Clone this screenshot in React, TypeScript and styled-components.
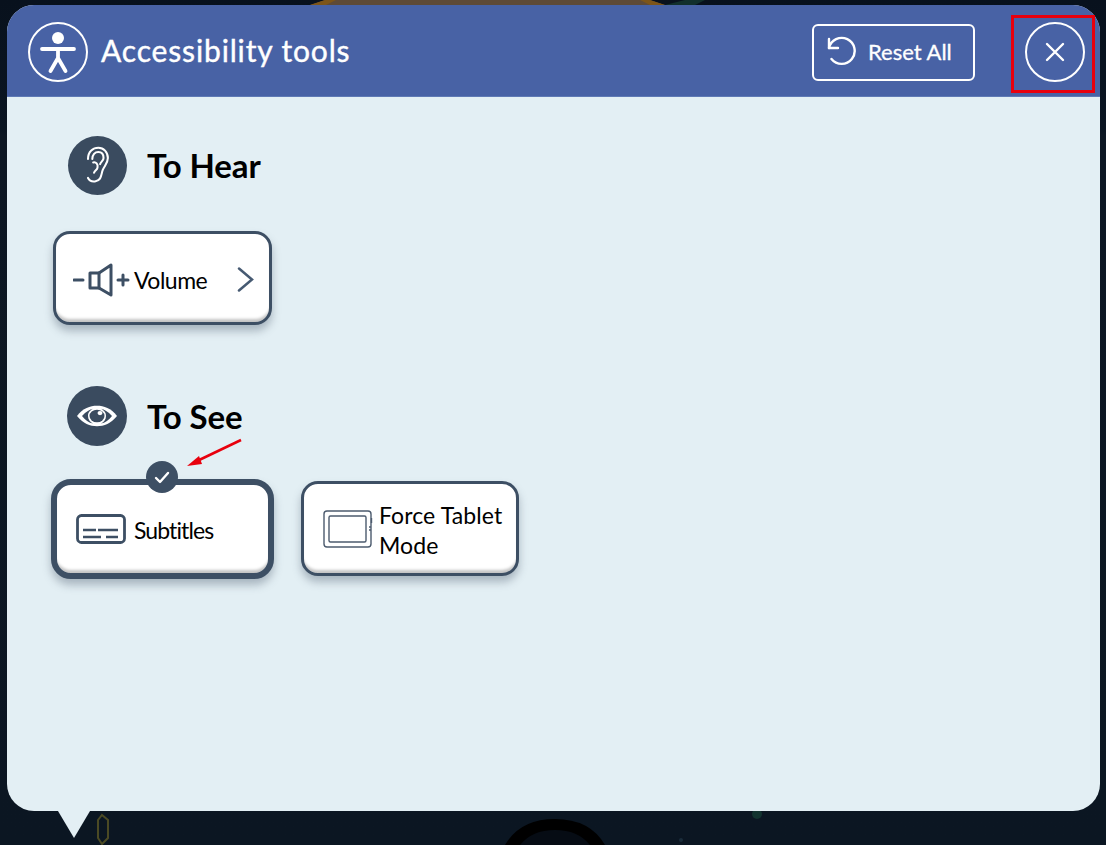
import React from "react";
import styled, { createGlobalStyle } from "styled-components";

const Global = createGlobalStyle`
  html, body { margin: 0; padding: 0; background: #0a1320; }
  body { font-family: "Lato", "Open Sans", sans-serif; }
`;

const Page = styled.div`
  position: relative;
  width: 1106px;
  height: 845px;
  overflow: hidden;
  padding: 5px 6px 0 7px;
  box-sizing: border-box;
  background: linear-gradient(180deg, #08111d 0, #0a1522 130px, #0d1723 135px, #0b1622 100%);
`;

const Backdrop = styled.svg`
  position: absolute;
  inset: 0;
  width: 1106px;
  height: 845px;
`;

const Panel = styled.div`
  position: relative;
  height: 806px;
  display: flex;
  flex-direction: column;
  background: #e3eff4;
  border-radius: 27px;

  &::after {
    content: "";
    position: absolute;
    left: 51px;
    top: 100%;
    border-left: 16.5px solid transparent;
    border-right: 16.5px solid transparent;
    border-top: 27px solid #e3eff4;
  }
`;

const Header = styled.header`
  height: 92px;
  flex: none;
  box-sizing: border-box;
  display: flex;
  align-items: center;
  padding: 2px 15px 0 21px;
  background: #4862a5;
  border-bottom: 1px solid #5f7ab5;
  border-radius: 27px 27px 0 0;
  color: #fff;
`;

const Title = styled.h1`
  margin: 0 0 4px 13px;
  flex: 1;
  font-size: 30px;
  font-weight: 400;
  letter-spacing: 0.85px;
  line-height: 1;
  -webkit-text-stroke: 0.4px #fff;
`;

const ResetButton = styled.button`
  width: 163px;
  height: 57px;
  margin: 2px 50px 0 0;
  box-sizing: border-box;
  display: flex;
  align-items: center;
  padding: 0 0 2px 12px;
  gap: 11px;
  background: transparent;
  border: 2.5px solid #fff;
  border-radius: 6px;
  color: #fff;
  font: 400 22px "Lato", sans-serif;
  -webkit-text-stroke: 0.3px #fff;
`;

const CloseButton = styled.button`
  width: 60px;
  height: 60px;
  box-sizing: border-box;
  display: flex;
  align-items: center;
  justify-content: center;
  padding: 0;
  background: transparent;
  border: 2px solid #fff;
  border-radius: 50%;
`;

const Body = styled.main`
  flex: 1;
  display: flex;
  flex-direction: column;
  padding: 38px 0 0 44px;
`;

const SectionHead = styled.div<{ $offset: number }>`
  display: flex;
  align-items: center;
  gap: 20px;
  height: 60px;
  margin-left: ${(p) => p.$offset}px;
`;

const SectionIcon = styled.div<{ $size: number }>`
  width: ${(p) => p.$size}px;
  height: ${(p) => p.$size}px;
  flex: none;
  border-radius: 50%;
  background: #3a4b5f;
  display: flex;
  align-items: center;
  justify-content: center;
`;

const SectionTitle = styled.h2`
  margin: 0;
  font-size: 33px;
  font-weight: 700;
  color: #000;
  line-height: 1;
  letter-spacing: -0.1px;
`;

const Row = styled.div<{ $top: number; $bottom: number; $left: number; $gap: number }>`
  display: flex;
  align-items: flex-start;
  gap: ${(p) => p.$gap}px;
  margin: ${(p) => p.$top}px 0 ${(p) => p.$bottom}px ${(p) => p.$left}px;
`;

const Card = styled.div<{ $w: number; $h: number; $active?: boolean; $pad: number; $drop?: number }>`
  position: relative;
  width: ${(p) => p.$w}px;
  height: ${(p) => p.$h}px;
  margin-top: ${(p) => p.$drop ?? 0}px;
  box-sizing: border-box;
  display: flex;
  align-items: center;
  padding-left: ${(p) => p.$pad}px;
  background: #fff;
  border: ${(p) => (p.$active ? 6 : 3)}px solid #3d4f64;
  border-radius: ${(p) => (p.$active ? 20 : 17)}px;
  box-shadow: inset 0 -5px 3px -2px #c4c4c4, 0 6px 8px rgba(60, 75, 95, 0.35);
  color: #000;
`;

const CardIcon = styled.svg<{ $right: number; $top: number }>`
  flex: none;
  margin: ${(p) => p.$top}px ${(p) => p.$right}px 0 0;
`;

const Label = styled.span<{ $wrap?: boolean; $track: number; $top: number }>`
  font-size: 23px;
  font-weight: 400;
  line-height: 30px;
  letter-spacing: ${(p) => p.$track}px;
  padding-top: ${(p) => p.$top}px;
  white-space: ${(p) => (p.$wrap ? "normal" : "nowrap")};
`;

const Chevron = styled.svg`
  position: absolute;
  right: 15px;
  top: 33px;
`;

const Badge = styled.div`
  position: absolute;
  left: 89px;
  top: -24px;
  width: 32px;
  height: 32px;
  border-radius: 50%;
  background: #3d4f64;
  display: flex;
  align-items: center;
  justify-content: center;
`;

const RedBox = styled.div`
  position: absolute;
  left: 1011px;
  top: 15px;
  width: 84px;
  height: 78px;
  box-sizing: border-box;
  border: 3px solid #e8000d;
`;

const Overlay = styled.svg`
  position: absolute;
  left: 0;
  top: 0;
  pointer-events: none;
`;

export default function App() {
  return (
    <Page>
      <Global />
      <Backdrop viewBox="0 0 1106 845">
        <path d="M310 5 L325 0 H650 L665 5 Z" fill="#5e4a36" />
        <path d="M310 5 L325 0 H336 L326 5 Z M640 0 H650 L665 5 H650 Z" fill="#7d5518" />
        <path d="M665 5 L685 0 H705 L695 5 Z" fill="#12302c" />
        <path d="M102 815 L108 820 V838 L102 844 L98 838 V820 Z" fill="none" stroke="#4b4a24" strokeWidth="2" />
        <circle cx="757" cy="814" r="5" fill="#12332f" />
        <circle cx="681" cy="840" r="2" fill="#1a2c3a" />
        <path d="M505 845 Q520 819 555 819 Q590 819 605 845 Z" fill="#000" />
        <path d="M520 845 Q532 830 555 830 Q578 830 590 845 Z" fill="#060c14" />
      </Backdrop>
      <Panel>
        <Header>
          <svg width="60" height="60" viewBox="0 0 60 60" fill="none" stroke="#fff">
            <circle cx="30" cy="30" r="29" strokeWidth="2" />
            <circle cx="30" cy="16" r="6" fill="#fff" stroke="none" />
            <path d="M14 27 H46" strokeWidth="3.800" strokeLinecap="round" />
            <path d="M30 27 V36 M30 36 L22.500 49 M30 36 L37.500 49" strokeWidth="3.800" strokeLinecap="round" />
          </svg>
          <Title>Accessibility tools</Title>
          <ResetButton>
            <svg width="31" height="31" viewBox="0 0 31 31" fill="none" stroke="#fff" strokeWidth="2.400" strokeLinecap="round" strokeLinejoin="round">
              <path d="M3 12 A13 13 0 1 1 5.500 23" />
              <path d="M3 3 V12 H12" />
            </svg>
            Reset All
          </ResetButton>
          <CloseButton aria-label="Close">
            <svg width="20" height="20" viewBox="0 0 20 20" stroke="#fff" strokeWidth="2.400" strokeLinecap="round">
              <path d="M2 2 L18 18 M18 2 L2 18" />
            </svg>
          </CloseButton>
        </Header>
        <Body>
          <SectionHead $offset={17}>
            <SectionIcon $size={59}>
              <svg width="25" height="38" viewBox="0 0 28 44" fill="none" stroke="#fff" strokeWidth="2.400" strokeLinecap="round">
                <path d="M3 15 C3 6 9 2 15 2 C21 2 26 7 26 14 C26 20 22 23 20 28 C18 33 19 40 11 41 C7 41.500 4 39 3 37" />
                <path d="M8 15 C8 10 11 7 15 7 C19 7 21 10 21 14 C21 17 18 18 17 21 M9 19 C12 18 15 21 14 25 C13.500 28 11 28 10 31" />
              </svg>
            </SectionIcon>
            <SectionTitle>To Hear</SectionTitle>
          </SectionHead>
          <Row $top={36} $bottom={61} $left={2} $gap={0}>
            <Card $w={219} $h={94} $pad={17}>
              <CardIcon $right={3} $top={4} width="58" height="34" viewBox="0 0 58 34" fill="none" stroke="#3d4f64" strokeLinecap="round" strokeLinejoin="round">
                <path d="M1 17 H10" strokeWidth="3" />
                <path d="M17 10 H26 V25 H17 Z" strokeWidth="3" />
                <path d="M26 10 L38 2 V32 L26 25" strokeWidth="3" />
                <path d="M45 17 H55 M50 12 V22" strokeWidth="3" />
              </CardIcon>
              <Label $track={-0.5} $top={4}>Volume</Label>
              <Chevron width="17" height="25" viewBox="0 0 17 25" fill="none" stroke="#465a72" strokeWidth="2.500" strokeLinecap="round">
                <path d="M2 1.500 L15 12.500 L2 23.500" />
              </Chevron>
            </Card>
          </Row>
          <SectionHead $offset={16}>
            <SectionIcon $size={60}>
              <svg width="42" height="22" viewBox="0 0 42 26" preserveAspectRatio="none">
                <path d="M1 13 C7 4 14 1 21 1 C28 1 35 4 41 13 C35 22 28 25 21 25 C14 25 7 22 1 13 Z" fill="#fff" />
                <path d="M6 13 C10 8 14 5 17 4.500 C13 7 12 10 12 13 C12 17 14 20 17 22 C13 21 9 18 6 13 Z M36 13 C32 8 28 5 25 4.500 C29 7 30 10 30 13 C30 17 28 20 25 22 C29 21 33 18 36 13 Z" fill="#3a4b5f" />
                <circle cx="21" cy="13" r="7.500" fill="#3a4b5f" />
                <circle cx="24" cy="9.500" r="2.500" fill="#fff" />
              </svg>
            </SectionIcon>
            <SectionTitle>To See</SectionTitle>
          </SectionHead>
          <Row $top={33} $bottom={0} $left={0} $gap={27}>
            <Card $w={223} $h={100} $pad={19} $active>
              <Badge>
                <svg width="16" height="13" viewBox="0 0 16 13" fill="none" stroke="#fff" strokeWidth="2.400" strokeLinecap="round" strokeLinejoin="round">
                  <path d="M2 7 L6 11 L14 2" />
                </svg>
              </Badge>
              <CardIcon $right={8} $top={0} width="50" height="30" viewBox="0 0 50 30" fill="none" stroke="#3d4f64">
                <rect x="1.500" y="1.500" width="47" height="27" rx="4" strokeWidth="2.800" />
                <path d="M7 16 H20 M22 16 H42 M7 23 H25 M30 23 H42" strokeWidth="2.400" />
              </CardIcon>
              <Label $track={-0.9} $top={2}>Subtitles</Label>
            </Card>
            <Card $w={218} $h={95} $pad={19} $drop={2}>
              <CardIcon $right={6} $top={0} width="50" height="38" viewBox="0 0 50 38" fill="none" stroke="#4c5b6e" strokeWidth="1.400">
                <rect x="1" y="1" width="47" height="36" rx="3" />
                <rect x="6" y="6" width="37" height="26" rx="1.500" />
                <path d="M48.500 8 V13 M46 17 H48 M46 20 H48" />
              </CardIcon>
              <Label $wrap $track={0.1} $top={2}>Force Tablet Mode</Label>
            </Card>
          </Row>
        </Body>
      </Panel>
      <RedBox />
      <Overlay width="1106" height="845" viewBox="0 0 1106 845">
        <path d="M241 440 L195 462" stroke="#e8000d" strokeWidth="2.500" />
        <path d="M187 466 L199 456 L202 464 Z" fill="#e8000d" />
      </Overlay>
    </Page>
  );
}
